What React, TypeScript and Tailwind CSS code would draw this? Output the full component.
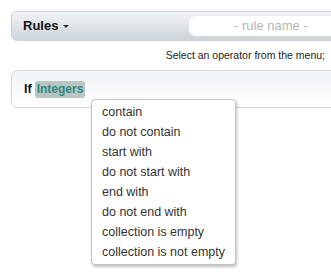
const operators = [
  "contain",
  "do not contain",
  "start with",
  "do not start with",
  "end with",
  "do not end with",
  "collection is empty",
  "collection is not empty",
];

export default function App() {
  return (
    <div
      className="relative w-[331px] h-[278px] overflow-hidden bg-white"
      style={{ fontFamily: '"Liberation Sans", Arial, sans-serif' }}
    >
      <div className="pt-[11px] pl-[11px]">
        <div className="flex items-center h-[30px] w-[340px] rounded-l-[6px] border border-[#cbd2d8] bg-gradient-to-b from-[#f2f4f6] to-[#cdd4da]">
          <div className="flex items-center w-[177px] pl-[11px] text-[13px] font-bold text-[#111]">
            Rules
            <span className="ml-[5px] mt-[1px] w-0 h-0 border-l-[3px] border-r-[3px] border-t-[3px] border-l-transparent border-r-transparent border-t-[#333]" />
          </div>
          <div className="flex-1 h-[20px] rounded-l-[7px] bg-white flex items-center">
            <span className="pl-[45px] text-[13px] text-[#b4b4b4]">- rule name -</span>
          </div>
        </div>
      </div>

      <div className="h-[29px] flex items-center justify-end pr-[6px] text-[10.5px] text-[#222]">
        Select an operator from the menu;
      </div>

      <div className="pl-[11px]">
        <div className="flex items-center h-[38px] w-[340px] rounded-l-[6px] border border-[#d4d8dc] bg-gradient-to-b from-[#f1f3f5] to-white pl-[12px]">
          <span className="text-[12.5px] font-bold text-[#111]">If</span>
          <span className="ml-[3px] px-[2px] rounded-[3px] bg-[#b9c5c2] text-[12px] font-bold text-[#2b8a7e] leading-[17px]">
            Integers
          </span>
        </div>
      </div>

      <div className="absolute left-[91px] top-[99px] w-[145px] rounded-[4px] border border-[#c4c4c4] bg-white shadow-[1px_2px_3px_rgba(0,0,0,0.25)] py-[2px]">
        {operators.map((op) => (
          <div key={op} className="h-[20px] flex items-center pl-[10px] text-[12.5px] text-[#333] whitespace-nowrap">
            {op}
          </div>
        ))}
      </div>
    </div>
  );
}
